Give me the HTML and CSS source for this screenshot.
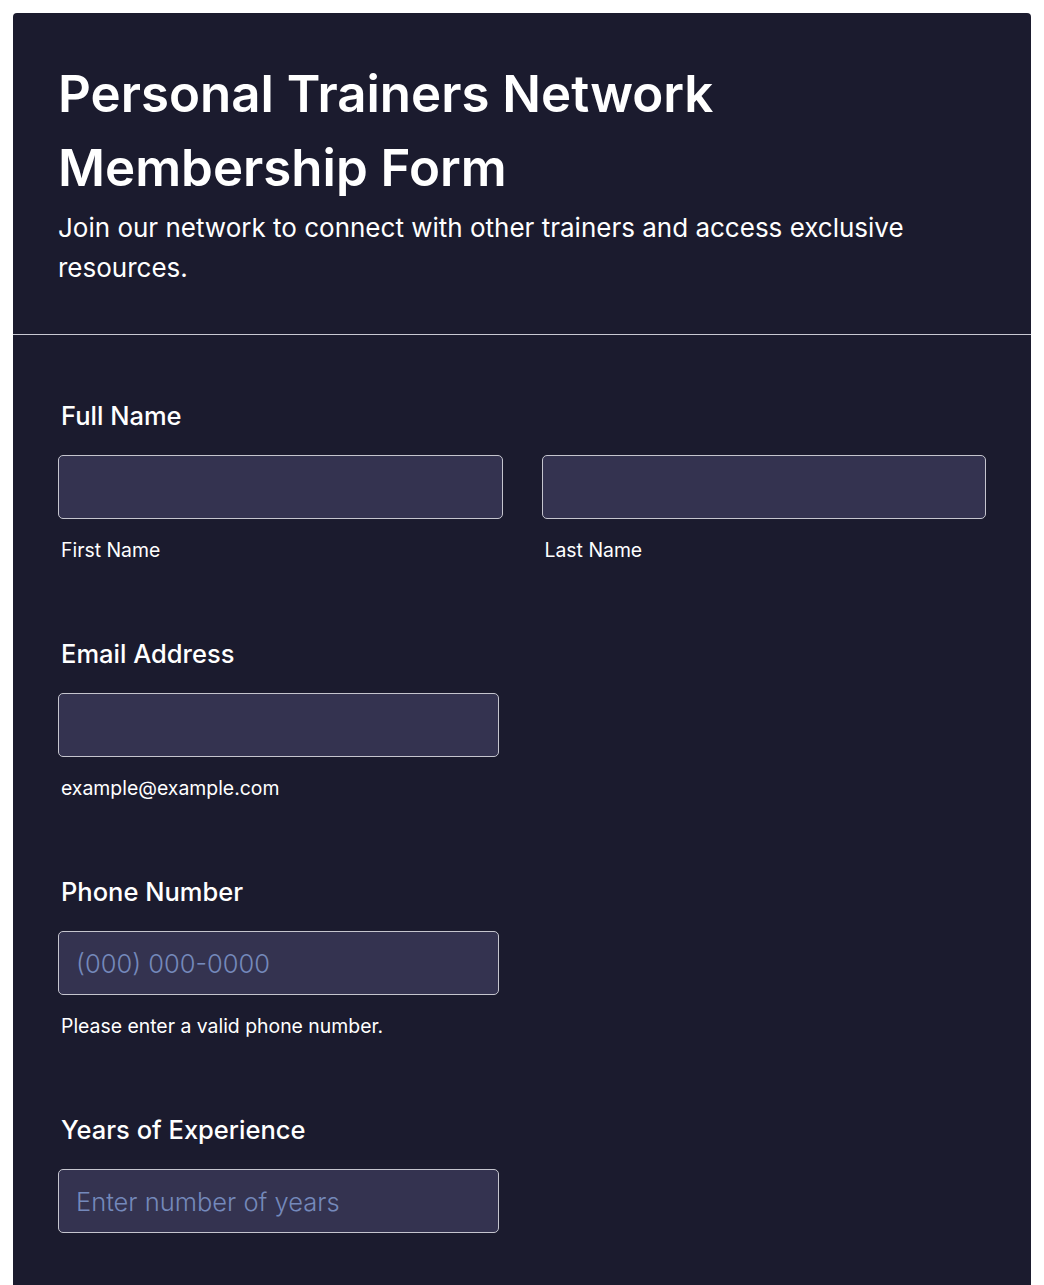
FILE: index.html
```html
<!DOCTYPE html>
<html lang="en">
<head>
<meta charset="utf-8">
<title>Personal Trainers Network Membership Form</title>
<link rel="stylesheet" href="styles.css">
</head>
<body>
<div class="card">
  <header class="form-header">
    <h1 class="title">Personal Trainers Network Membership Form</h1>
    <p class="subtitle">Join our network to connect with other trainers and access exclusive resources.</p>
  </header>
  <form class="form-body">
    <div class="field">
      <label class="label">Full Name</label>
      <div class="name-row">
        <div class="sub">
          <input class="input" type="text">
          <span class="sublabel">First Name</span>
        </div>
        <div class="sub">
          <input class="input" type="text">
          <span class="sublabel">Last Name</span>
        </div>
      </div>
    </div>
    <div class="field">
      <label class="label">Email Address</label>
      <div class="sub single">
        <input class="input" type="email">
        <span class="sublabel">example@example.com</span>
      </div>
    </div>
    <div class="field">
      <label class="label">Phone Number</label>
      <div class="sub single">
        <input class="input" type="tel" placeholder="(000) 000-0000">
        <span class="sublabel">Please enter a valid phone number.</span>
      </div>
    </div>
    <div class="field">
      <label class="label">Years of Experience</label>
      <div class="sub single">
        <input class="input" type="number" placeholder="Enter number of years">
      </div>
    </div>
  </form>
</div>
</body>
</html>
```

FILE: styles.css
```css
html, body {
  margin: 0;
  padding: 0;
  background: #ffffff;
}
body {
  font-family: Inter, "Noto Sans", sans-serif;
  color: #ffffff;
  padding: 13px 13px 0 13px;
}
.card {
  background: #1b1b2e;
  border-radius: 4px 4px 0 0;
  min-height: 1290px;
}
.form-header {
  padding: 44px 45px 46px 45px;
  border-bottom: 1px solid #c9c9d2;
}
.title {
  margin: 0;
  font-size: 51px;
  line-height: 74px;
  font-weight: 600;
  color: #ffffff;
}
.subtitle {
  margin: 3px 0 0 0;
  font-size: 26px;
  line-height: 40px;
  font-weight: 400;
  color: #ffffff;
}
.form-body {
  padding: 63px 45px 0 45px;
  display: flex;
  flex-direction: column;
  gap: 72px;
}
.field {
  display: flex;
  flex-direction: column;
}
.label {
  font-size: 25.5px;
  line-height: 36px;
  font-weight: 500;
  padding-left: 3px;
  margin-bottom: 21px;
  color: #ffffff;
}
.name-row {
  display: flex;
  gap: 39px;
}
.sub {
  display: flex;
  flex-direction: column;
  flex: 1;
}
.sub.single {
  width: 441px;
  flex: none;
}
.input {
  box-sizing: border-box;
  width: 100%;
  height: 64px;
  background: #343350;
  border: 1px solid #c5c5ce;
  border-radius: 5px;
  padding: 0 17px;
  font-family: Inter, "Noto Sans", sans-serif;
  font-size: 25.5px;
  font-weight: 300;
  color: #ffffff;
  outline: none;
  -moz-appearance: textfield;
}
.input::-webkit-outer-spin-button,
.input::-webkit-inner-spin-button {
  -webkit-appearance: none;
  margin: 0;
}
.input::placeholder {
  color: #7489bb;
  opacity: 1;
}
.sublabel {
  margin-top: 18px;
  font-size: 19.4px;
  line-height: 27px;
  padding-left: 3px;
  color: #ffffff;
}
```
